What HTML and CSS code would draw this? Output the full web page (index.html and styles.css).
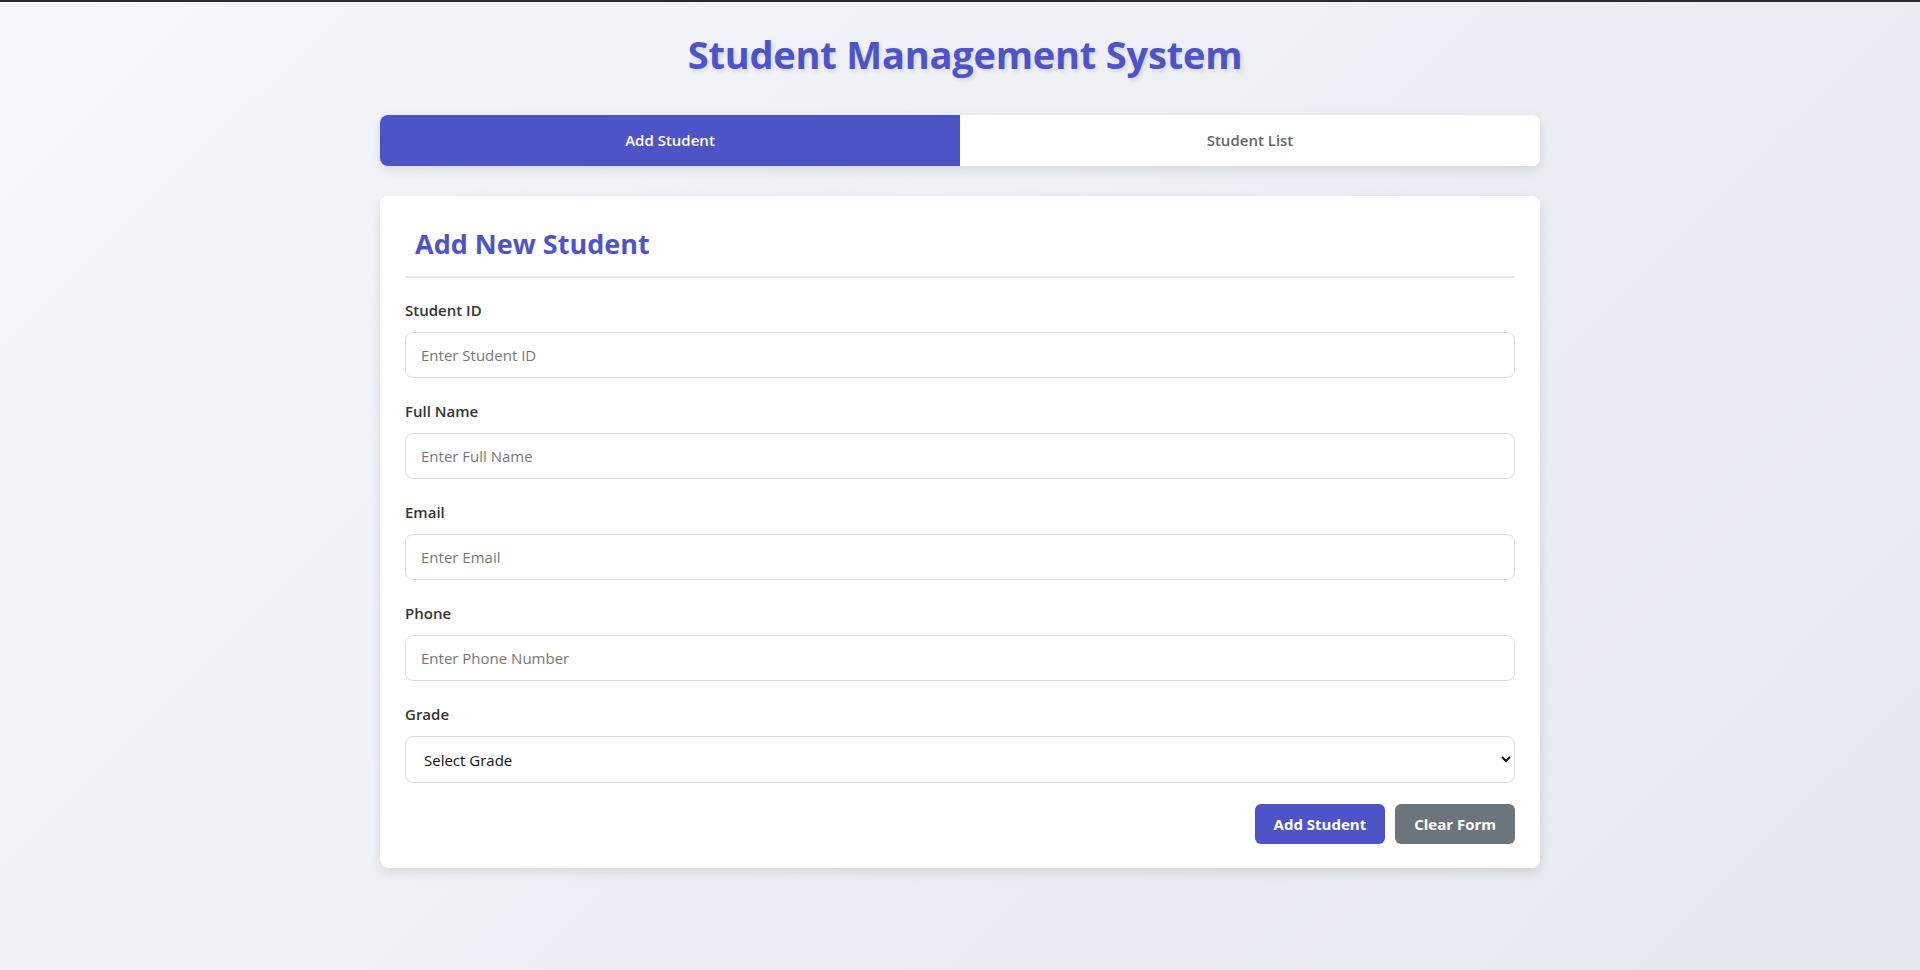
FILE: index.html
```html
<!DOCTYPE html>
<html lang="en">
<head>
<meta charset="UTF-8">
<title>Student Management System</title>
<link rel="stylesheet" href="styles.css">
</head>
<body>
<div class="container">
  <h1 class="page-title">Student Management System</h1>
  <nav class="tabs">
    <button class="tab tab-active" type="button">Add Student</button>
    <button class="tab" type="button">Student List</button>
  </nav>
  <section class="card">
    <h2 class="card-title">Add New Student</h2>
    <form class="student-form">
      <div class="form-group">
        <label class="form-label" for="sid">Student ID</label>
        <input class="form-control" id="sid" type="text" placeholder="Enter Student ID">
      </div>
      <div class="form-group">
        <label class="form-label" for="fname">Full Name</label>
        <input class="form-control" id="fname" type="text" placeholder="Enter Full Name">
      </div>
      <div class="form-group">
        <label class="form-label" for="email">Email</label>
        <input class="form-control" id="email" type="email" placeholder="Enter Email">
      </div>
      <div class="form-group">
        <label class="form-label" for="phone">Phone</label>
        <input class="form-control" id="phone" type="tel" placeholder="Enter Phone Number">
      </div>
      <div class="form-group">
        <label class="form-label" for="grade">Grade</label>
        <select class="form-control form-select" id="grade">
          <option>Select Grade</option>
          <option>Grade 9</option>
          <option>Grade 10</option>
          <option>Grade 11</option>
          <option>Grade 12</option>
        </select>
      </div>
      <div class="form-actions">
        <button class="btn btn-primary" type="button">Add Student</button>
        <button class="btn btn-secondary" type="button">Clear Form</button>
      </div>
    </form>
  </section>
</div>
</body>
</html>
```
FILE: styles.css
```css
* {
  box-sizing: border-box;
}

html, body {
  margin: 0;
  padding: 0;
}

body {
  min-height: 100vh;
  border-top: 2px solid #2b2b2b;
  background: linear-gradient(135deg, #f5f7fa 0%, #e3e7ef 100%);
  font-family: "Open Sans", "Noto Sans", sans-serif;
  color: #333;
}

.container {
  max-width: 1200px;
  margin: 0 auto;
  padding: 20px;
}

.page-title {
  margin: 4px 0 33px;
  padding-left: 10px;
  text-align: center;
  font-size: 38px;
  line-height: 56px;
  font-weight: 700;
  color: #4e54c8;
  letter-spacing: -0.2px;
  text-shadow: 2px 2px 4px rgba(0, 0, 0, 0.12);
}

.tabs {
  display: flex;
  background: #fff;
  border-radius: 8px;
  overflow: hidden;
  box-shadow: 0 4px 12px rgba(0, 0, 0, 0.1);
}

.tab {
  flex: 1;
  border: none;
  background: #fff;
  padding: 15px;
  font-family: inherit;
  font-size: 15px;
  line-height: 21px;
  font-weight: 600;
  color: #666;
  cursor: pointer;
}

.tab-active {
  background: #4e54c8;
  color: #fff;
}

.card {
  margin-top: 30px;
  background: #fff;
  border-radius: 8px;
  padding: 25px 25px 24px;
  box-shadow: 0 4px 12px rgba(0, 0, 0, 0.1);
}

.card-title {
  margin: 0 0 21px;
  padding: 4px 0 13px 10px;
  border-bottom: 2px solid #e9ecef;
  font-size: 27px;
  line-height: 38px;
  font-weight: 700;
  color: #4e54c8;
}

.form-group {
  display: flex;
  flex-direction: column;
  margin-bottom: 22px;
}

.form-label {
  margin-bottom: 11px;
  font-size: 15px;
  line-height: 22px;
  font-weight: 600;
  color: #333;
}

.form-control {
  width: 100%;
  height: 46px;
  padding: 12px 15px;
  border: 1px solid #ddd;
  border-radius: 8px;
  background: #fff;
  font-family: inherit;
  font-size: 15px;
  line-height: 20px;
  color: #333;
}

.form-control::placeholder {
  color: #777;
}

.form-select {
  height: 47px;
  padding: 10px 12px 10px 14px;
  color: #111;
}

.form-actions {
  display: flex;
  justify-content: flex-end;
  gap: 10px;
  margin-top: -1px;
}

.btn {
  border: none;
  border-radius: 6px;
  padding: 10px 19px;
  font-family: inherit;
  font-size: 15px;
  line-height: 20px;
  font-weight: 700;
  color: #fff;
  cursor: pointer;
}

.btn-primary {
  background: #4e54c8;
}

.btn-secondary {
  background: #6c757d;
}
```
